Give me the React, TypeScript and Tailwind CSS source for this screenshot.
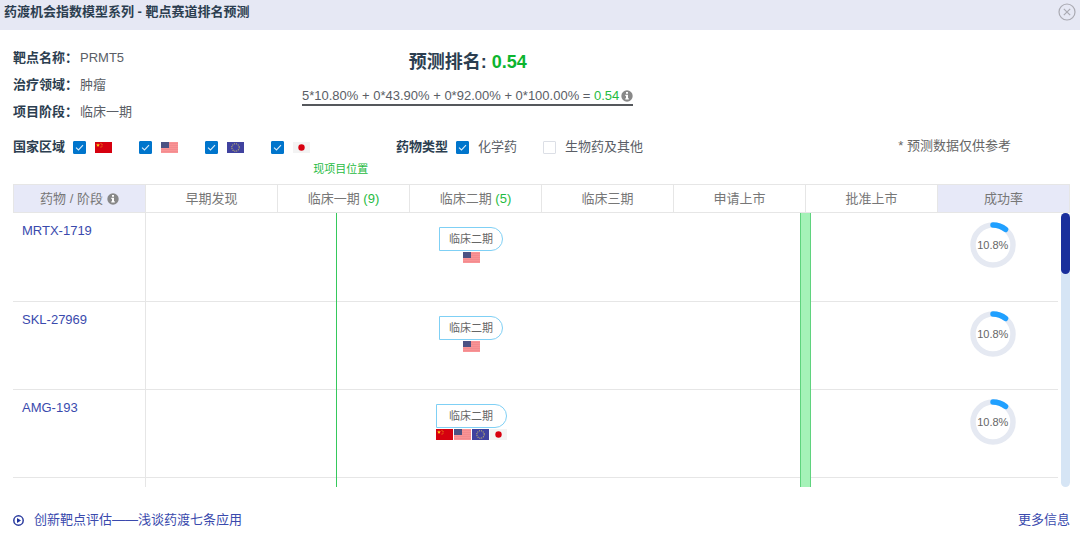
import { useState, type ReactNode } from "react";

type Country = "cn" | "us" | "eu" | "jp";

const COUNTRY_NAMES: Record<Country, string> = {
  cn: "中国",
  us: "美国",
  eu: "欧盟",
  jp: "日本",
};

const COUNTRIES: Country[] = ["cn", "us", "eu", "jp"];

const INFO = [
  { label: "靶点名称：", value: "PRMT5" },
  { label: "治疗领域：", value: "肿瘤" },
  { label: "项目阶段：", value: "临床一期" },
];

const STAGES = [
  { name: "早期发现" },
  { name: "临床一期", count: 9 },
  { name: "临床二期", count: 5 },
  { name: "临床三期" },
  { name: "申请上市" },
  { name: "批准上市" },
];

const DRUGS: { name: string; stage: string; countries: Country[]; rate: number }[] = [
  { name: "MRTX-1719", stage: "临床二期", countries: ["us"], rate: 10.8 },
  { name: "SKL-27969", stage: "临床二期", countries: ["us"], rate: 10.8 },
  { name: "AMG-193", stage: "临床二期", countries: ["cn", "us", "eu", "jp"], rate: 10.8 },
];

function Flag({ country }: { country: Country }) {
  return (
    <svg viewBox="0 0 17 11" className="h-[11px] w-[17px] shrink-0" aria-hidden="true">
      {country === "cn" && (
        <>
          <rect width="17" height="11" fill="#d6000f" />
          <path d="M3 1.3l.5 1.3h1.4l-1.1.8.4 1.4L3 4l-1.2.8.4-1.4-1.1-.8h1.4z" fill="#ffd21a" />
          <circle cx="6" cy="1.3" r=".5" fill="#f0a015" />
          <circle cx="7" cy="2.4" r=".5" fill="#f0a015" />
          <circle cx="7" cy="3.9" r=".5" fill="#f0a015" />
          <circle cx="6" cy="5" r=".5" fill="#f0a015" />
        </>
      )}
      {country === "us" && (
        <>
          <rect width="17" height="11" fill="#f99496" />
          <path d="M0 1.5h17M0 3.5h17M0 5.5h17M0 7.5h17M0 9.5h17" stroke="#f0878b" strokeWidth=".7" />
          <rect width="8" height="6" fill="#4c5283" />
        </>
      )}
      {country === "eu" && (
        <>
          <rect width="17" height="11" fill="#40429f" />
          <circle cx="8.5" cy="5.5" r="3.7" fill="none" stroke="#c4b76a" strokeWidth="1.1" strokeDasharray="1 .94" />
        </>
      )}
      {country === "jp" && (
        <>
          <rect width="17" height="11" fill="#f3f3f3" />
          <circle cx="8.5" cy="5.5" r="3.2" fill="#d8000f" />
        </>
      )}
    </svg>
  );
}

function InfoIcon() {
  return (
    <svg viewBox="0 0 12 12" className="size-3 shrink-0" aria-hidden="true">
      <circle cx="6" cy="6" r="5.7" fill="#888" />
      <path d="M5 2h2v1.7H5zM4.3 4.7H7v3.5h.8v1.3H4.3V8.2H5V6h-.7z" fill="#fff" />
    </svg>
  );
}

function CheckItem({
  label,
  checked: initial,
  children,
}: {
  label?: string;
  checked: boolean;
  children: ReactNode;
}) {
  const [checked, setChecked] = useState(initial);
  return (
    <label className="flex cursor-pointer items-center gap-[9px]">
      <span className="relative flex">
        <input
          type="checkbox"
          aria-label={label}
          checked={checked}
          onChange={(e) => setChecked(e.target.checked)}
          className="size-[13px] appearance-none rounded-[1px] border border-[#dcdfe6] bg-white checked:border-[#0075cc] checked:bg-[#0075cc]"
        />
        {checked && (
          <svg viewBox="0 0 13 13" className="pointer-events-none absolute inset-0 size-[13px]" aria-hidden="true">
            <path d="M3 6.6l2.5 2.4 4.5-4.8" fill="none" stroke="#d9ecfa" strokeWidth="1.1" />
          </svg>
        )}
      </span>
      {children}
    </label>
  );
}

function RateRing({ rate }: { rate: number }) {
  return (
    <div className="relative mx-auto size-[46px]">
      <svg viewBox="0 0 46 46" className="size-full" aria-hidden="true">
        <circle cx="23" cy="23" r="20" fill="none" stroke="#e5e9f2" strokeWidth="5.5" />
        <circle
          cx="23"
          cy="23"
          r="20"
          fill="none"
          stroke="#20a0ff"
          strokeWidth="5.5"
          strokeLinecap="round"
          pathLength="100"
          strokeDasharray={`${rate} 100`}
          transform="rotate(-90 23 23)"
        />
      </svg>
      <span className="absolute inset-0 flex items-center justify-center text-[11px] text-[#666]">{rate}%</span>
    </div>
  );
}

export default function App() {
  return (
    <main className="bg-white font-['Liberation_Sans','Noto_Sans_CJK_SC',sans-serif] text-[13px] leading-5 text-[#5a5e66]">
      <header className="flex h-[30px] items-center justify-between bg-[#e6e8f4] pr-1 pb-1.5 pl-1">
        <h1 className="font-bold text-[#2c3e50]">药渡机会指数模型系列 - 靶点赛道排名预测</h1>
        <button type="button" aria-label="关闭" className="cursor-pointer">
          <svg viewBox="0 0 18 18" className="size-[18px]" fill="none" stroke="#aaaab2" aria-hidden="true">
            <circle cx="9" cy="9" r="8" strokeWidth="1.2" />
            <path d="M5.8 5.8l6.4 6.4M12.2 5.8l-6.4 6.4" strokeWidth="1.2" />
          </svg>
        </button>
      </header>

      <div className="pr-2.5 pl-[13px]">
        <section className="grid grid-cols-[289px_auto_1fr] pt-3.5">
          <dl className="leading-[27px]">
            {INFO.map((item) => (
              <div key={item.label} className="flex gap-0.5">
                <dt className="font-bold text-[#2c3e50]">{item.label}</dt>
                <dd>{item.value}</dd>
              </div>
            ))}
          </dl>
          <div className="text-center">
            <h2 className="pt-1 text-lg leading-7 font-bold text-[#2c3e50]">
              预测排名: <span className="text-[#0db52f]">0.54</span>
            </h2>
            <p className="mt-3 flex items-center gap-0.5 border-b-2 border-[#55585c] leading-4">
              <span>
                5*10.80% + 0*43.90% + 0*92.00% + 0*100.00% = <span className="text-[#1fbb42]">0.54</span>
              </span>
              <InfoIcon />
            </p>
          </div>
        </section>

        <section className="flex items-center pt-[11px]">
          <fieldset className="flex w-[383px] items-center gap-2">
            <legend className="float-left font-bold text-[#2c3e50]">国家区域</legend>
            <div className="flex gap-[27px]">
              {COUNTRIES.map((c) => (
                <CheckItem key={c} label={COUNTRY_NAMES[c]} checked>
                  <Flag country={c} />
                </CheckItem>
              ))}
            </div>
          </fieldset>
          <fieldset className="flex items-center gap-2">
            <legend className="float-left font-bold text-[#2c3e50]">药物类型</legend>
            <div className="flex gap-[26px]">
              <CheckItem checked>化学药</CheckItem>
              <CheckItem checked={false}>生物药及其他</CheckItem>
            </div>
          </fieldset>
          <p className="mr-[59px] mb-0.5 ml-auto text-[#666]">* 预测数据仅供参考</p>
        </section>

        <section className="relative pt-[26px]">
          <span className="absolute top-px left-[31%] -translate-x-1/2 text-[11px] text-[#1fbb42]">现项目位置</span>
          <div className="grid grid-cols-8 border-y border-r border-[#e6e6e6] text-center leading-[27px] text-[#777]">
            <div className="flex items-center justify-center gap-1 border-l border-[#e6e6e6] bg-[#e7e9f8]">
              药物 / 阶段 <InfoIcon />
            </div>
            {STAGES.map((s) => (
              <div key={s.name} className="border-l border-[#e6e6e6]">
                {s.name}
                {s.count && <span className="text-[#1fbb42]"> ({s.count})</span>}
              </div>
            ))}
            <div className="border-l border-[#e6e6e6] bg-[#e7e9f8]">成功率</div>
          </div>

          <div className="relative flex h-[274px] justify-between overflow-hidden">
            <table className="w-[calc(100%-12px)] table-fixed border-collapse self-start">
              <colgroup>
                <col className="w-[132px]" />
                <col span={7} />
              </colgroup>
              <tbody>
                {DRUGS.map((d) => (
                  <tr key={d.name} className="h-[88px] border-b border-[#e6e6e6] align-top">
                    <th scope="row" className="border-r border-[#e6e6e6] pt-2 pl-[9px] text-left font-normal">
                      <a href="#drug" className="text-[#3a4aad]">
                        {d.name}
                      </a>
                    </th>
                    {STAGES.map((s) => (
                      <td key={s.name} className="pt-3.5 text-center">
                        {s.name === d.stage && (
                          <div className="inline-flex flex-col gap-px">
                            <span className="rounded-r-full border border-[#7fd0f5] px-[9px] text-[11px] leading-[22px] text-[#666]">
                              {d.stage}
                            </span>
                            <span className="flex justify-center gap-px">
                              {d.countries.map((c) => (
                                <Flag key={c} country={c} />
                              ))}
                            </span>
                          </div>
                        )}
                      </td>
                    ))}
                    <td className="pt-[9px]">
                      <RateRing rate={d.rate} />
                    </td>
                  </tr>
                ))}
                <tr className="h-[88px]">
                  <th className="border-r border-[#e6e6e6]" />
                  <td colSpan={7} />
                </tr>
              </tbody>
            </table>
            <div className="absolute inset-y-0 left-[30.6%] w-px bg-[#35c95c]" />
            <div className="absolute inset-y-0 left-[74.5%] w-[11px] border-x border-[#5fd37e] bg-[#a5f2b8]" />
            <div className="w-[9px] rounded-full bg-[#d6e5f5]">
              <div className="h-[61px] rounded-full bg-[#1a2f9c]" />
            </div>
          </div>
        </section>

        <footer className="flex items-center justify-between pt-[23px] text-[#3a4aad]">
          <a href="#article" className="flex items-center gap-2.5">
            <svg viewBox="0 0 11 11" className="size-[11px]" aria-hidden="true">
              <circle cx="5.5" cy="5.5" r="4.7" fill="none" stroke="#2b3c9f" strokeWidth="1.5" />
              <path d="M4 3l4 2.5L4 8z" fill="#1a2f9c" />
            </svg>
            创新靶点评估——浅谈药渡七条应用
          </a>
          <a href="#more">更多信息</a>
        </footer>
      </div>
    </main>
  );
}
